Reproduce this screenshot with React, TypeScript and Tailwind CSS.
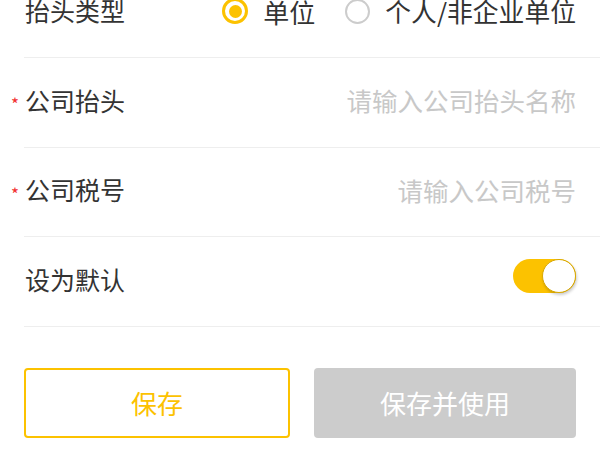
import { useState } from 'react';

function Radio({ checked }: { checked: boolean }) {
  return checked ? (
    <span className="w-[26px] h-[26px] rounded-full border-[3px] border-[#fcc200] flex items-center justify-center">
      <span className="w-[13px] h-[13px] rounded-full bg-[#fcc200]" />
    </span>
  ) : (
    <span className="w-[25px] h-[25px] rounded-full border-2 border-[#cccccc]" />
  );
}

function Row({ children }: { children: React.ReactNode }) {
  return (
    <div className="relative h-[89.4px] ml-6 border-b border-[#eeeeee] flex items-center pr-6 pb-[4px]">
      {children}
    </div>
  );
}

export default function App() {
  const [type, setType] = useState<'company' | 'personal'>('company');
  const [isDefault, setIsDefault] = useState(true);

  return (
    <div
      className="w-[600px] h-[450px] overflow-hidden bg-white text-[#333333] text-[25px]"
      style={{ fontFamily: '"Noto Sans CJK SC", "Noto Sans", sans-serif' }}
    >
      <div className="-mt-[31px]">
        <Row>
          <span className="flex-1 pl-px">抬头类型</span>
          <button className="flex items-center gap-[15px] text-[26px]" onClick={() => setType('company')}>
            <Radio checked={type === 'company'} />
            <span>单位</span>
          </button>
          <button className="flex items-center gap-[15px] ml-[30px] text-[25.8px]" onClick={() => setType('personal')}>
            <Radio checked={type === 'personal'} />
            <span>个人/非企业单位</span>
          </button>
        </Row>
        <Row>
          <span className="absolute -left-[13px] text-[#f23030] text-[17px] top-[37px] leading-none">*</span>
          <span className="pl-px shrink-0">公司抬头</span>
          <input
            className="flex-1 min-w-0 text-right text-[25.5px] outline-none placeholder:text-[#c8c8c8]"
            placeholder="请输入公司抬头名称"
          />
        </Row>
        <Row>
          <span className="absolute -left-[13px] text-[#f23030] text-[17px] top-[37px] leading-none">*</span>
          <span className="pl-px shrink-0">公司税号</span>
          <input
            className="flex-1 min-w-0 text-right text-[25.5px] outline-none placeholder:text-[#c8c8c8]"
            placeholder="请输入公司税号"
          />
        </Row>
        <Row>
          <span className="flex-1 pl-px">设为默认</span>
          <button
            onClick={() => setIsDefault(!isDefault)}
            className={`w-[63px] h-[34px] -mt-[6px] rounded-full flex items-center ${isDefault ? 'bg-[#fcc200] justify-end' : 'bg-[#e5e5e5] justify-start'}`}
          >
            <span className="w-[34px] h-[34px] rounded-full bg-white border border-[#d9a800] shadow-[1px_2px_3px_rgba(0,0,0,0.2)]" />
          </button>
        </Row>
      </div>
      <div className="flex gap-6 px-6 mt-[41px]">
        <button className="flex-1 h-[70px] rounded-[4px] border-2 border-[#fcc200] text-[#fcc200] text-[26px]">
          保存
        </button>
        <button className="flex-1 h-[70px] rounded-[4px] bg-[#cccccc] text-white text-[26px]">
          保存并使用
        </button>
      </div>
    </div>
  );
}
